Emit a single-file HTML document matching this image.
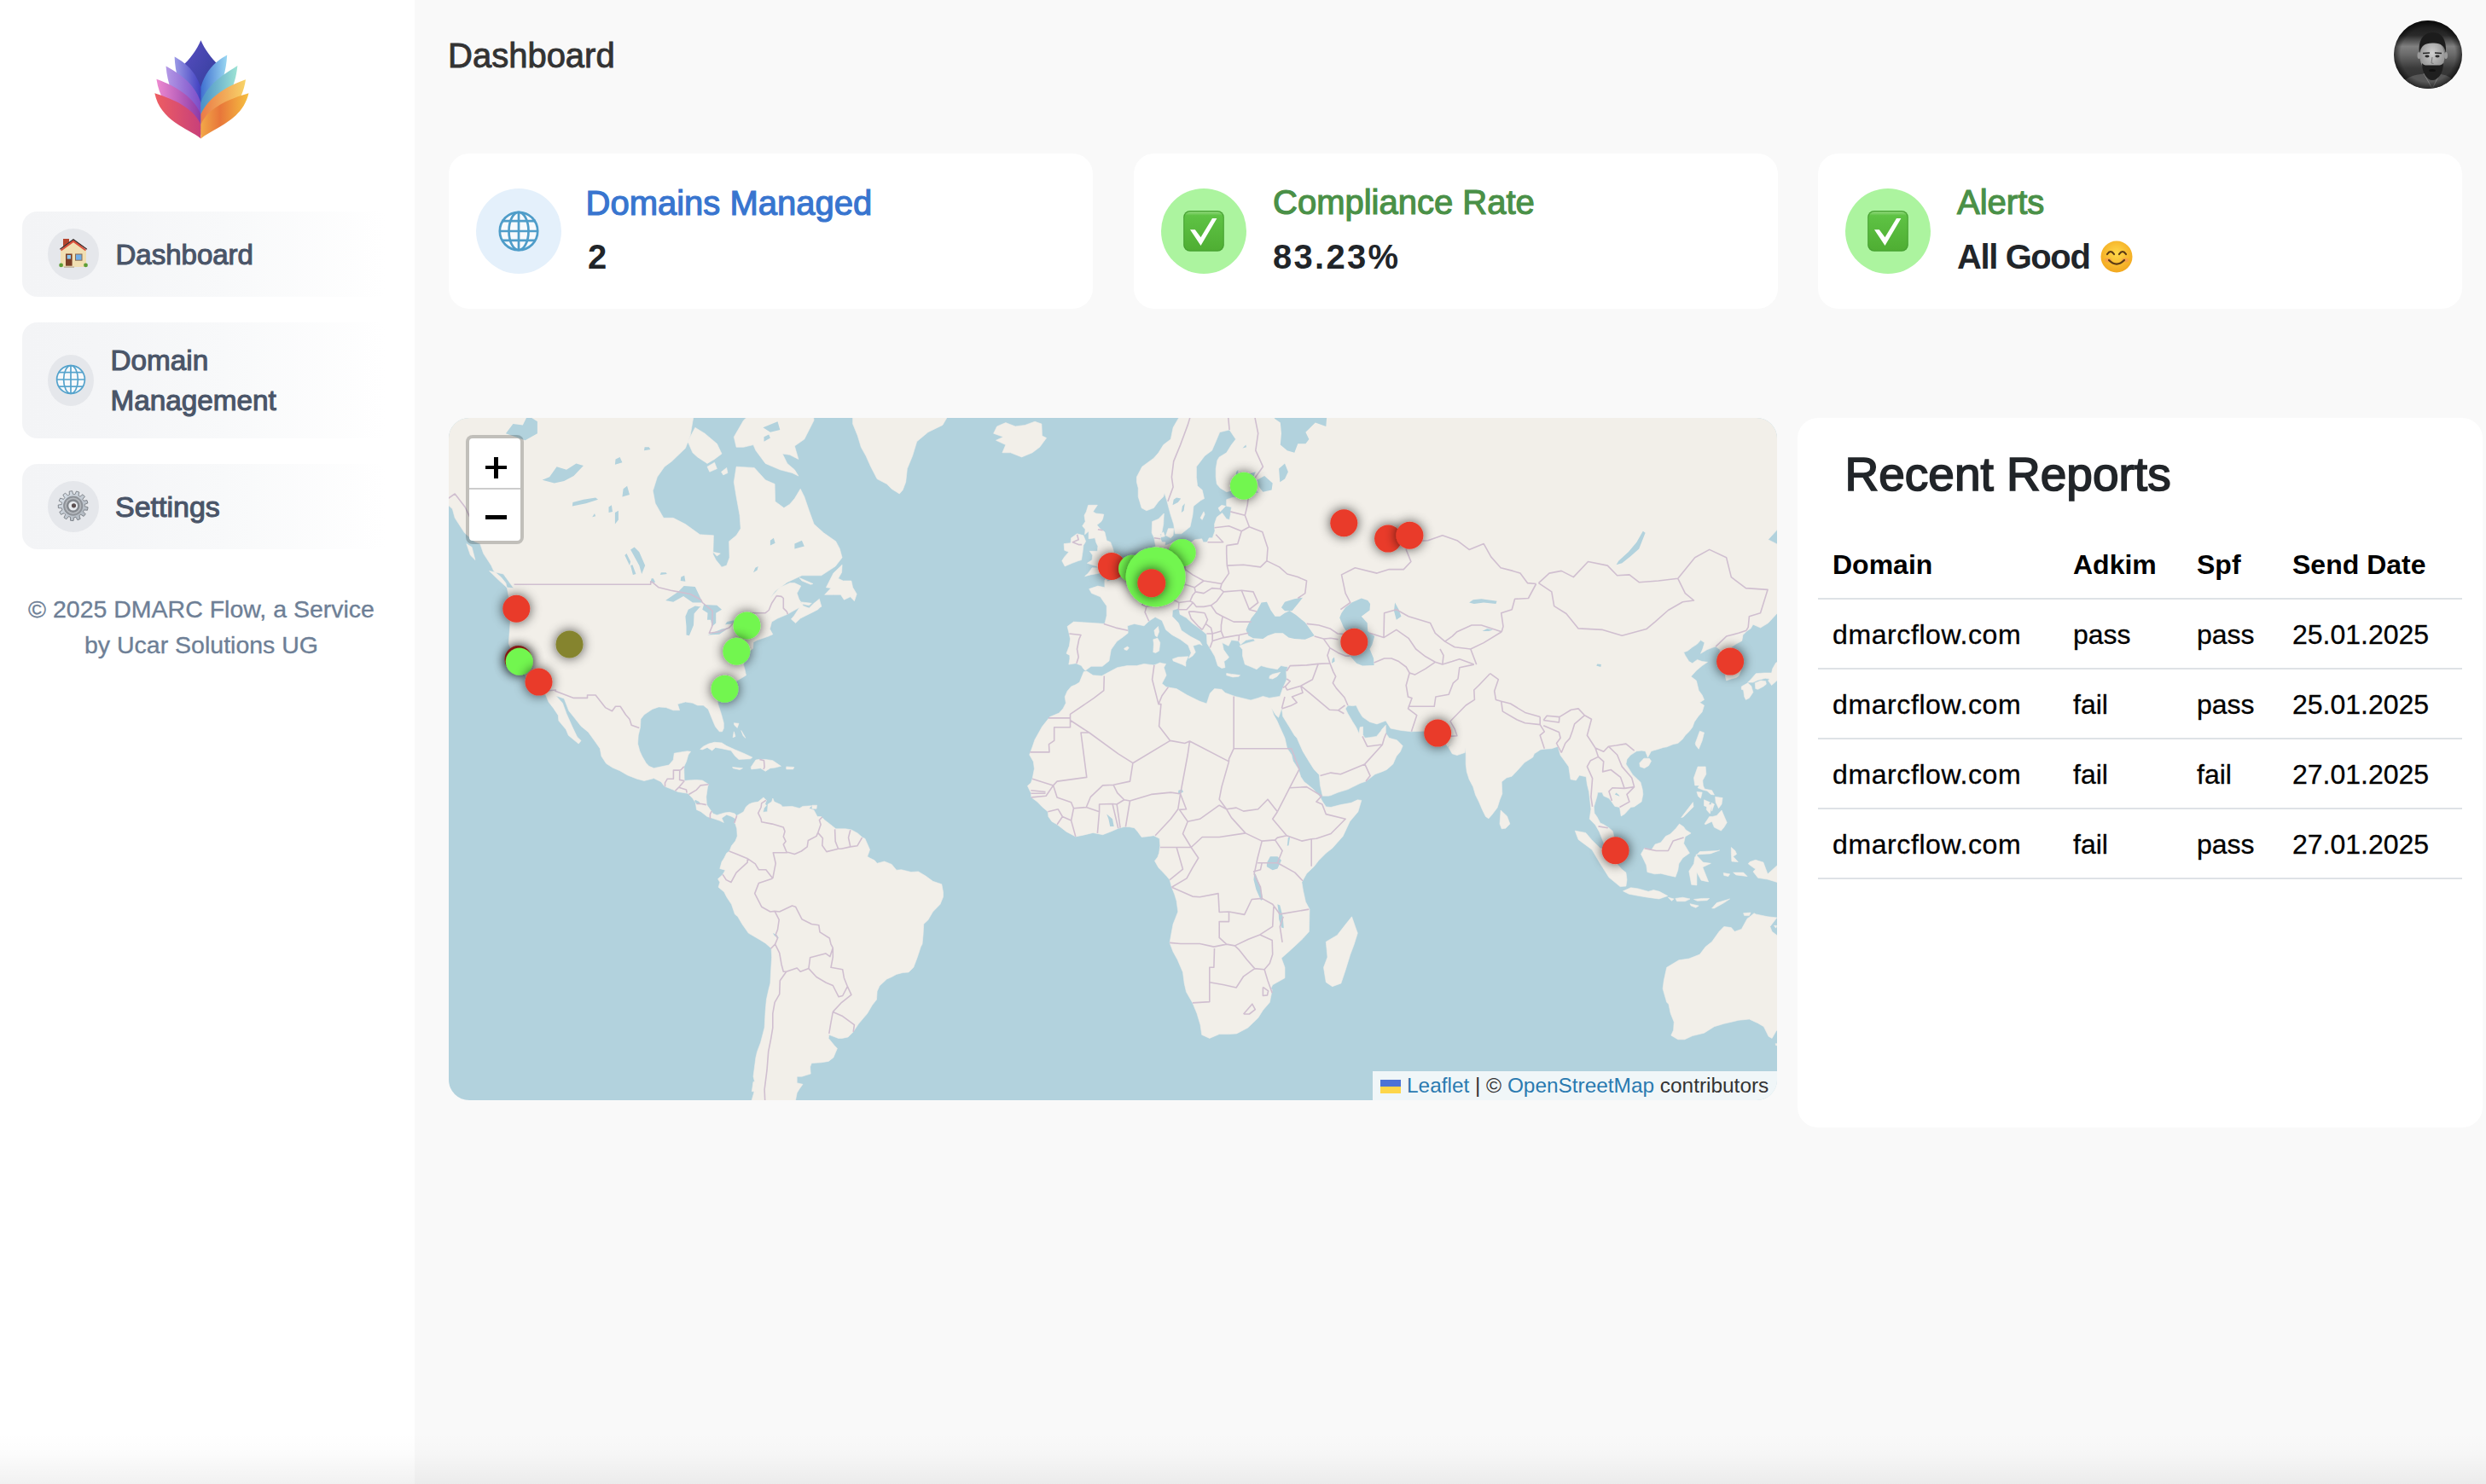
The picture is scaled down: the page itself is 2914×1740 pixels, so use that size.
<!DOCTYPE html>
<html><head><meta charset="utf-8"><title>Dashboard</title>
<style>
*{box-sizing:border-box;margin:0;padding:0}
html,body{width:2914px;height:1740px;overflow:hidden;background:#f9f9f9;font-family:"Liberation Sans",sans-serif}
.abs{position:absolute}
#side{position:absolute;left:0;top:0;width:486px;height:1740px;background:#fff}
.nav{position:absolute;left:26px;width:434px;border-radius:18px;background:linear-gradient(90deg,#f3f4f6 0%,#f4f5f7 20%,#f8f9fa 55%,#ffffff 98%)}
.ic{position:absolute;border-radius:50%;background:#e5e7eb}
.nt{position:absolute;font-size:32px;line-height:48px;color:#4a5568;white-space:nowrap;-webkit-text-stroke:1.1px #4a5568}
.foot{position:absolute;left:0;width:472px;text-align:center;font-size:28px;line-height:42px;color:#6e7f96;-webkit-text-stroke:0.35px #6e7f96}
.card{position:absolute;top:180px;height:182px;width:755px;background:#fff;border-radius:24px}
.cic{position:absolute;left:32px;top:41px;width:100px;height:100px;border-radius:50%}
.ct{position:absolute;left:163px;top:37px;font-size:40px;line-height:40px;white-space:nowrap;-webkit-text-stroke:1.2px currentColor}
.cv{position:absolute;left:163px;top:101px;font-size:40px;line-height:40px;font-weight:bold;color:#212529;white-space:nowrap}
#map{position:absolute;left:526px;top:490px;width:1557px;height:800px;border-radius:24px;overflow:hidden;background:#b2d2dd}
#rep{position:absolute;left:2107px;top:490px;width:803px;height:832px;background:#fff;border-radius:24px}
.th,.td{position:absolute;font-size:32px;line-height:48px;white-space:nowrap;color:#000}
.td{-webkit-text-stroke:0.3px #000}
.th{font-weight:bold}
.hr{position:absolute;left:24px;width:755px;height:2px;background:#dee2e6}
</style></head><body>
<div id="side">
 <svg class="abs" style="left:176px;top:42px" width="122" height="126" viewBox="0 0 122 126" id="logo">
<defs>
<linearGradient id="lg0" x1="0" y1="0" x2="1" y2="1"><stop offset="0" stop-color="#5a4fc4"/><stop offset="1" stop-color="#2b3a92"/></linearGradient>
<linearGradient id="lg1" x1="0" y1="0" x2="1" y2="0"><stop offset="0" stop-color="#9c9ae6"/><stop offset="1" stop-color="#3f3fc0"/></linearGradient>
<linearGradient id="lg2" x1="0" y1="0" x2="1" y2="0"><stop offset="0" stop-color="#b49ae6"/><stop offset="1" stop-color="#7a4cc8"/></linearGradient>
<linearGradient id="lg3" x1="0" y1="0" x2="1" y2="0"><stop offset="0" stop-color="#ee8ad0"/><stop offset="1" stop-color="#8a3aa8"/></linearGradient>
<linearGradient id="lg4" x1="0" y1="0" x2="1" y2="0"><stop offset="0" stop-color="#ee5e62"/><stop offset="1" stop-color="#c8407a"/></linearGradient>
<linearGradient id="rg1" x1="1" y1="0" x2="0" y2="0"><stop offset="0" stop-color="#9ad8f2"/><stop offset="1" stop-color="#3f6fd0"/></linearGradient>
<linearGradient id="rg2" x1="1" y1="0" x2="0" y2="0"><stop offset="0" stop-color="#9ee4d4"/><stop offset="1" stop-color="#4a8fc8"/></linearGradient>
<linearGradient id="rg3" x1="1" y1="0" x2="0" y2="0"><stop offset="0" stop-color="#f8d468"/><stop offset="1" stop-color="#ea7a48"/></linearGradient>
<linearGradient id="rg4" x1="1" y1="0" x2="0" y2="0"><stop offset="0" stop-color="#f6c040"/><stop offset="0.6" stop-color="#e8763a"/><stop offset="1" stop-color="#f2a848"/></linearGradient>
</defs>
<path d="M59.4 5.2 C55 16 46 28 37 36 C45 50 55 62 59.4 80 C64 62 74 50 82 36 C73 28 64 16 59.4 5.2Z" fill="url(#lg0)"/>
<path d="M59.4 100 C48 80 30 62 28.6 24.4 C38 30 52 38 59.4 60Z" fill="url(#lg1)"/>
<path d="M59.4 100 C70 80 88 62 90.2 22.4 C80 28 66 38 59.4 60Z" fill="url(#rg1)"/>
<path d="M59.4 110 C46 96 22 78 18.5 35.5 C30 42 52 54 59.4 78Z" fill="url(#lg2)"/>
<path d="M59.4 110 C72 96 98 78 102.4 35 C92 42 68 54 59.4 78Z" fill="url(#rg2)"/>
<path d="M59.4 116 C44 104 14 92 7.4 50.7 C22 56 50 68 59.4 92Z" fill="url(#lg3)"/>
<path d="M59.4 116 C74 104 106 92 112 51.2 C98 56 70 68 59.4 92Z" fill="url(#rg3)"/>
<path d="M59.4 120.4 C44 108 12 100 5.3 67.3 C20 72 50 82 59.4 104Z" fill="url(#lg4)"/>
<path d="M59.4 120.4 C74 108 108 100 115.5 67.3 C100 72 68 82 59.4 104Z" fill="url(#rg4)"/>
</svg>
 <div class="nav" style="top:248px;height:100px"></div>
 <div class="ic" style="left:56px;top:268px;width:60px;height:60px"></div>
 <svg class="abs" style="left:56px;top:268px" width="60" height="60" viewBox="0 0 60 60">
  <rect x="18" y="12" width="7" height="10" fill="#b5452f"/>
  <polygon points="30,12.5 47,24.5 30,16 13,24.5" fill="#d9503c"/>
  <polygon points="30,15.5 45,25.5 45,45 15,45 15,25.5" fill="#f1dfb2"/>
  <path d="M14.5 24.3 L30 12.8 L45.8 24.3" fill="none" stroke="#333" stroke-width="1.2"/>
  <path d="M15.5 25.5 L30 15 L44.5 25.5" fill="none" stroke="#d9503c" stroke-width="2"/>
  <rect x="21" y="29.5" width="7.6" height="14.2" fill="#7b3f27"/>
  <rect x="22.6" y="31" width="4.4" height="4.6" fill="#8cc7f0"/>
  <rect x="32" y="29.5" width="8.5" height="8.2" fill="#8b6b52"/>
  <rect x="33" y="30.5" width="6.5" height="6.2" fill="#6faee8"/>
  <circle cx="15.6" cy="42.9" r="2.4" fill="#5e9e35"/>
  <circle cx="44.5" cy="42.9" r="2.4" fill="#5e9e35"/>
  <rect x="19" y="44.5" width="12" height="1.3" fill="#b9ad9b"/>
 </svg>
 <div class="nt" style="left:135.5px;top:274.5px;font-size:33px">Dashboard</div>

 <div class="nav" style="top:378px;height:136px"></div>
 <div class="ic" style="left:56px;top:416px;width:54px;height:60px"></div>
 <svg class="abs" style="left:56px;top:416px" width="54" height="60" viewBox="0 0 54 60">
  <g fill="none" stroke="#55a3cc" stroke-width="1.7">
   <circle cx="27" cy="29" r="16.4" fill="#f7f9fb"/>
   <ellipse cx="27" cy="29" rx="8.4" ry="16.4"/>
   <line x1="27" y1="12.6" x2="27" y2="45.4"/>
   <line x1="10.6" y1="29" x2="43.4" y2="29"/>
   <line x1="12.5" y1="20.6" x2="41.5" y2="20.6"/>
   <line x1="12.5" y1="37.2" x2="41.5" y2="37.2"/>
  </g>
 </svg>
 <div class="nt" style="left:129.5px;top:398.5px;font-size:33.3px">Domain</div>
 <div class="nt" style="left:129.5px;top:446px;font-size:33.3px">Management</div>

 <div class="nav" style="top:544px;height:100px"></div>
 <div class="ic" style="left:56px;top:564px;width:60px;height:60px"></div>
 <svg class="abs" style="left:56px;top:564px" width="60" height="60" viewBox="0 0 60 60" id="gear"><defs><linearGradient id="gg" x1="0" y1="0" x2="1" y2="1"><stop offset="0" stop-color="#dfe6ee"/><stop offset="1" stop-color="#a9b0b8"/></linearGradient></defs>
<path d="M43.29,29.64 47.11,30.85 46.42,34.27 42.43,33.89 41.99,34.91 41.48,35.90 44.31,38.74 42.10,41.45 38.74,39.26 37.89,39.96 36.97,40.59 38.15,44.42 34.94,45.80 32.99,42.30 31.90,42.52 30.80,42.66 30.06,46.60 26.58,46.32 26.48,42.31 25.41,42.01 24.37,41.61 21.89,44.76 18.94,42.90 20.71,39.30 19.90,38.53 19.17,37.70 15.51,39.34 13.76,36.32 17.00,33.95 16.64,32.90 16.38,31.82 12.38,31.57 12.23,28.08 16.20,27.49 16.37,26.40 16.64,25.32 13.21,23.24 14.71,20.08 18.49,21.40 19.15,20.51 19.89,19.68 17.83,16.25 20.62,14.14 23.35,17.07 24.35,16.60 25.39,16.20 25.16,12.20 28.61,11.63 29.67,15.50 30.78,15.54 31.88,15.68 33.53,12.02 36.85,13.13 35.99,17.04 36.95,17.60 37.87,18.23 41.03,15.76 43.45,18.28 40.87,21.35 41.47,22.28 41.99,23.27 45.93,22.55 46.91,25.91 43.20,27.43 43.29,28.53Z" fill="url(#gg)" stroke="#6d7278" stroke-width="0.8"/>
<circle cx="29.7" cy="29.1" r="11.6" fill="#8e9298"/>
<circle cx="29.7" cy="29.1" r="9.6" fill="#b4b8bd"/>
<circle cx="29.7" cy="29.1" r="7.8" fill="#83878d"/>
<circle cx="29.7" cy="29.1" r="5.4" fill="#e6eaee"/>
<circle cx="30.5" cy="28.8" r="2.6" fill="#5b4f50"/>
</svg>
 <div class="nt" style="left:135px;top:570px;font-size:34px">Settings</div>

 <div class="foot" style="top:692.5px;font-size:28.5px">© 2025 DMARC Flow, a Service<br>by Ucar Solutions UG</div>
</div>

<div class="abs" style="left:525px;top:44.8px;font-size:40px;line-height:40px;color:#333;white-space:nowrap;-webkit-text-stroke:0.9px #333">Dashboard</div>
<svg class="abs" style="left:2806px;top:24px" width="80" height="80" viewBox="0 0 80 80" id="avatar"><defs>
<clipPath id="avc"><circle cx="40" cy="40" r="40"/></clipPath>
<linearGradient id="avbg" x1="0" y1="0" x2="0" y2="1"><stop offset="0" stop-color="#141414"/><stop offset="0.22" stop-color="#2a2a2a"/><stop offset="0.38" stop-color="#808080"/><stop offset="0.5" stop-color="#6a6a6a"/><stop offset="0.7" stop-color="#3a3a3a"/><stop offset="1" stop-color="#2e2e2e"/></linearGradient>
<radialGradient id="avf" cx="50%" cy="40%" r="60%"><stop offset="0" stop-color="#cfcfcf"/><stop offset="1" stop-color="#8c8c8c"/></radialGradient>
<radialGradient id="avs" cx="50%" cy="50%" r="50%"><stop offset="0" stop-color="#000" stop-opacity="0"/><stop offset="0.8" stop-color="#000" stop-opacity="0"/><stop offset="1" stop-color="#000" stop-opacity="0.55"/></radialGradient>
</defs>
<g clip-path="url(#avc)">
<rect width="80" height="80" fill="url(#avbg)"/>
<path d="M6 80 C10 68 22 62 45 62 C62 62 72 68 76 80Z" fill="#575757"/>
<path d="M35 62 L45 80 L54 62" fill="none" stroke="#8a8a8a" stroke-width="0.8"/>
<ellipse cx="45" cy="42" rx="14.5" ry="19" fill="url(#avf)"/>
<ellipse cx="29.5" cy="41" rx="2" ry="4" fill="#9a9a9a"/><ellipse cx="61" cy="41" rx="2" ry="4" fill="#9a9a9a"/>
<path d="M30 38 C28 22 36 14 46 14 C56 14 62 22 61 38 C59 29 55 26 45 26.5 C36 26.5 32 30 30 38Z" fill="#1c1c1c"/>
<path d="M33 50 C33 62 39 70 45 70 C52 70 58 62 58 50 C55 54 51 52 45 52.5 C39 52 36 54 33 50Z" fill="#1f1f1f"/>
<ellipse cx="45" cy="58.5" rx="4" ry="1.6" fill="#111"/>
<ellipse cx="39" cy="42" rx="2.6" ry="1.4" fill="#2a2a2a"/><ellipse cx="51" cy="42" rx="2.6" ry="1.4" fill="#2a2a2a"/>
<path d="M34 38.5 L42 38 M48 38 L56 38.5" stroke="#262626" stroke-width="1.6"/>
<path d="M45 43 L44 50 L46.5 50.5" fill="none" stroke="#777" stroke-width="1"/>
<rect width="80" height="80" fill="url(#avs)"/>
</g></svg>

<div class="card" style="left:526px">
 <div class="cic" style="background:#e4f0fb"></div>
 <svg class="abs" style="left:32px;top:41px" width="100" height="100" viewBox="0 0 100 100">
  <g fill="none" stroke="#4f9dc9" stroke-width="2.7">
   <circle cx="50" cy="50" r="22.2" fill="#f7fafd"/>
   <ellipse cx="50" cy="50" rx="11.5" ry="22.2"/>
   <line x1="50" y1="27.8" x2="50" y2="72.2"/>
   <line x1="27.8" y1="50" x2="72.2" y2="50"/>
   <line x1="30" y1="38.2" x2="70" y2="38.2"/>
   <line x1="30" y1="60.8" x2="70" y2="60.8"/>
  </g>
 </svg>
 <div class="ct" style="color:#3875cf;left:160.5px;top:38px">Domains Managed</div>
 <div class="cv">2</div>
</div>

<div class="card" style="left:1329px">
 <div class="cic" style="background:#acf49f"></div>
 <svg class="abs" style="left:32px;top:41px" width="100" height="100" viewBox="0 0 100 100"><defs><linearGradient id="ckg" x1="0" y1="0" x2="0" y2="1"><stop offset="0" stop-color="#8fd87a"/><stop offset="0.1" stop-color="#5ec244"/><stop offset="1" stop-color="#4fae33"/></linearGradient></defs>
  <rect x="26.2" y="26" width="47.6" height="47.8" rx="7.6" fill="#45a030"/>
  <rect x="27.3" y="27.2" width="45.4" height="45.2" rx="6.6" fill="url(#ckg)"/>
  <path d="M34 48.2 L39.8 48.2 L46.5 57.3 L60 35 L65.4 35 L46.5 67 Z" fill="#fff"/>
 </svg>
 <div class="ct" style="color:#4a9047">Compliance Rate</div>
 <div class="cv" style="letter-spacing:2.3px">83.23%</div>
</div>

<div class="card" style="left:2131px">
 <div class="cic" style="background:#acf49f"></div>
 <svg class="abs" style="left:32px;top:41px" width="100" height="100" viewBox="0 0 100 100">
  <rect x="26.2" y="26" width="47.6" height="47.8" rx="7.6" fill="#45a030"/>
  <rect x="27.3" y="27.2" width="45.4" height="45.2" rx="6.6" fill="url(#ckg)"/>
  <path d="M34 48.2 L39.8 48.2 L46.5 57.3 L60 35 L65.4 35 L46.5 67 Z" fill="#fff"/>
 </svg>
 <div class="ct" style="color:#4a9047">Alerts</div>
 <div class="cv" style="letter-spacing:-1.4px">All Good</div>
 <svg class="abs" style="left:330px;top:101px" width="40" height="40" viewBox="0 0 40 40">
  <defs><radialGradient id="sm" cx="50%" cy="40%" r="60%"><stop offset="0" stop-color="#ffd84a"/><stop offset="1" stop-color="#f2a71e"/></radialGradient></defs>
  <circle cx="20" cy="20" r="18.5" fill="url(#sm)"/>
  <ellipse cx="10" cy="24" rx="4" ry="2.5" fill="#f58a5a" opacity=".5"/>
  <ellipse cx="30" cy="24" rx="4" ry="2.5" fill="#f58a5a" opacity=".5"/>
  <path d="M9 17 Q13 11 17 17 M23 17 Q27 11 31 17" fill="none" stroke="#5b3a14" stroke-width="2.2" stroke-linecap="round"/>
  <path d="M11 24 Q20 33 29 24" fill="none" stroke="#5b3a14" stroke-width="2.2" stroke-linecap="round"/>
 </svg>
</div>
<div id="map"><svg width="1557" height="800" viewBox="0 0 1557 800" style="position:absolute;left:0;top:0">
<defs><filter id="sh" x="-80%" y="-80%" width="260%" height="260%"><feGaussianBlur in="SourceAlpha" stdDeviation="7"/><feOffset dx="0" dy="0"/><feComponentTransfer><feFuncA type="linear" slope="0.7"/></feComponentTransfer><feMerge><feMergeNode/><feMergeNode in="SourceGraphic"/></feMerge></filter></defs>
<path d="M319.5,63.3 325.7,58.4 326.9,64.5 321.8,66.9ZM309.8,157.2 318.3,159.1 314.4,162.0ZM-217.6,-144.9 -189.1,86.7 -75.3,92.4 -24.1,86.7 -4.2,99.1 4.3,106.7 7.2,117.3 18.5,134.8 29.9,144.7 36.7,147.6 40.7,159.1 49.8,173.1 52.7,179.4 61.2,186.6 66.9,193.6 68.6,200.5 72.0,219.0 72.0,240.6 70.3,264.4 73.7,273.2 78.3,282.0 81.1,284.9 82.2,288.4 84.5,292.0 91.9,306.0 101.6,309.4 104.4,311.5 111.8,320.3 117.0,333.0 122.6,340.2 128.3,348.7 128.9,355.1 137.4,365.3 140.3,372.2 152.2,382.1 155.1,378.4 150.5,374.0 144.8,362.1 138.0,346.7 133.4,334.3 125.5,325.7 135.2,329.0 140.8,343.5 146.5,350.6 155.1,361.5 163.6,368.4 172.1,380.3 177.3,387.7 179.0,396.8 184.6,405.3 192.0,410.1 200.6,413.7 209.7,419.0 220.5,423.2 229.0,425.5 240.4,422.6 248.9,426.7 252.9,432.0 263.2,436.1 268.8,438.5 280.2,440.2 285.9,446.1 289.3,451.3 290.5,459.4 295.6,461.7 303.0,467.5 308.7,469.2 317.2,472.1 322.3,474.4 320.0,469.2 325.7,465.2 332.0,467.5 337.7,470.9 338.8,472.6 334.8,474.9 338.2,468.6 335.4,464.0 329.1,462.3 323.5,462.9 314.4,465.7 309.8,464.0 302.4,453.6 301.8,444.3 303.5,432.6 304.7,429.7 297.3,425.0 289.9,424.4 280.2,425.0 276.2,425.5 275.7,408.9 278.5,402.9 280.8,395.0 283.6,391.3 279.7,390.7 271.7,391.9 264.3,393.2 263.2,401.0 258.0,407.1 251.8,408.3 240.4,410.7 234.7,408.3 231.3,404.7 226.7,396.8 223.9,390.7 221.6,382.1 222.2,372.2 224.5,362.7 225.0,353.2 229.0,348.0 238.7,341.5 246.1,338.9 254.6,339.6 263.2,342.8 270.6,342.8 268.3,335.6 277.4,333.0 285.9,334.3 291.6,337.0 298.4,337.0 304.1,341.5 307.5,350.0 310.9,358.3 312.6,362.1 317.2,367.8 320.6,367.8 322.3,364.0 322.3,357.7 319.5,347.4 315.5,335.0 314.9,328.4 318.9,321.7 323.5,318.3 331.4,311.5 334.8,310.1 342.8,305.3 348.5,301.8 346.8,294.1 345.6,289.9 346.2,285.6 349.6,279.1 350.8,276.2 351.9,274.0 356.5,270.3 357.0,262.9 361.6,260.6 368.4,258.3 374.7,256.1 379.8,253.8 376.4,247.6 378.6,239.1 385.5,235.1 396.8,230.3 402.5,227.1 411.1,222.2 404.8,231.9 401.4,235.9 406.5,240.6 412.2,235.1 416.8,232.7 426.4,227.9 432.7,224.7 436.7,220.6 433.8,213.2 428.1,217.3 422.4,223.1 415.6,220.6 410.5,212.3 408.2,205.6 412.8,197.1 405.4,193.6 399.7,193.6 388.3,198.8 376.9,210.7 382.6,203.1 396.8,192.7 413.9,184.8 436.7,184.8 453.2,174.0 461.1,163.8 458.3,153.4 453.7,144.7 439.5,134.8 428.1,124.6 422.4,108.8 416.8,92.4 412.2,83.3 405.4,94.6 399.7,101.2 392.9,105.6 382.6,97.9 382.1,77.5 371.2,72.8 358.2,58.4 337.1,57.2 334.3,75.2 337.1,92.4 341.1,114.2 342.2,129.7 337.1,137.8 328.6,144.7 329.1,163.8 325.7,173.1 320.0,174.9 313.2,166.6 309.8,160.1 310.4,137.8 294.4,136.8 277.4,124.6 263.2,117.3 251.8,117.3 242.1,100.2 239.3,85.6 244.4,69.3 252.9,57.2 261.4,50.9 277.4,35.6 283.1,20.9 285.9,4.2 294.4,-41.4 237.6,-84.6 -217.6,-84.6ZM428.1,2.8 422.4,14.0 416.8,25.0 405.4,33.0 409.9,48.4 399.7,43.3 391.2,42.1 396.8,53.4 405.4,60.8 409.9,68.1 402.5,64.5 388.3,60.8 371.2,53.4 359.9,38.2 357.0,31.6 345.6,34.3 337.1,34.3 334.3,22.3 345.6,2.8 359.9,-10.4 368.4,-17.9 266.0,-84.6 436.7,-84.6 425.3,-17.9ZM280.2,27.7 288.8,11.3 300.1,18.2 314.4,30.3 320.0,42.1 311.5,48.4 303.0,53.4 291.6,45.9 285.9,40.8ZM303.0,57.2 311.5,52.2 314.4,59.6 305.8,63.3ZM528.3,89.0 519.2,83.3 513.5,77.5 502.1,71.6 494.7,57.2 489.0,44.6 483.3,34.3 479.3,20.9 473.6,7.0 473.6,-17.9 465.1,-84.6 664.2,-84.6 630.1,-25.6 596.0,-20.9 578.9,8.4 561.8,16.8 548.7,27.7 543.6,44.6 537.4,59.6 535.7,75.2 532.2,84.5ZM638.6,18.2 642.6,9.9 652.8,5.6 664.2,9.9 675.6,8.4 687.0,4.2 694.9,7.0 695.5,20.9 700.6,23.6 692.7,34.3 684.1,40.8 671.6,45.9 658.5,40.8 648.9,40.8 652.8,31.6 641.5,26.3 650.0,22.3ZM294.7,388.5 298.4,385.2 304.7,382.1 311.5,380.3 320.0,380.9 325.7,384.6 335.4,388.9 345.6,393.2 355.9,398.0 353.6,399.8 340.0,400.4 335.4,396.2 330.9,390.1 320.0,387.7 312.6,386.4 308.7,390.1 303.0,386.4 297.3,388.9ZM354.2,409.5 359.9,401.0 363.8,400.4 371.2,400.4 379.8,401.7 389.4,408.3 382.6,410.1 376.9,410.7 371.2,414.3 365.6,410.7 354.7,411.9ZM395.7,408.9 404.8,409.5 403.7,411.9 395.7,411.9ZM332.6,409.5 344.5,410.7 341.1,412.5 333.1,410.7ZM334.3,357.7 340.0,358.3 338.2,363.4 334.8,360.2ZM334.3,367.8 336.0,373.4 333.1,374.7ZM342.8,366.5 345.1,370.3 347.9,375.3 345.1,372.8ZM440.6,207.3 448.0,199.6 442.4,198.8 450.9,182.1 461.1,172.2 460.6,181.2 456.6,188.3 462.3,191.0 471.9,191.0 473.6,198.8 478.2,206.5 475.4,214.8 470.8,209.8 463.4,213.2 459.4,207.3 450.9,207.3ZM47.5,179.4 64.0,183.0 76.0,199.6 68.0,198.8 58.4,190.1ZM20.8,147.6 27.1,151.5 31.0,166.6 25.4,161.0ZM411.1,187.5 427.0,194.5 424.2,195.3 413.9,191.0ZM411.6,215.7 425.3,217.3 422.4,219.8 413.9,218.1ZM428.1,223.9 436.7,221.4 434.4,212.3 428.7,217.3ZM337.7,466.3 342.8,463.4 345.6,461.7 348.5,455.9 351.9,453.0 355.9,451.3 362.7,450.1 369.0,444.9 372.4,448.4 370.7,453.0 372.4,454.2 369.5,457.7 368.4,462.3 373.5,461.7 374.1,453.0 378.6,450.1 379.8,446.1 381.5,450.1 389.4,453.6 391.2,455.9 402.5,455.4 411.1,457.7 415.0,455.4 425.3,454.8 422.4,457.7 428.1,460.0 432.1,467.5 436.7,467.5 440.6,471.5 448.0,477.2 453.7,481.8 465.1,481.8 471.9,482.9 479.3,486.9 485.0,492.1 487.9,493.2 493.6,506.3 490.7,514.3 493.6,516.0 499.2,518.8 502.1,522.3 510.6,520.0 519.2,523.4 524.8,530.2 530.5,529.7 541.9,532.5 550.4,531.9 559.0,537.1 567.5,543.3 577.8,546.8 579.5,555.9 579.5,561.7 576.0,570.3 567.5,579.0 561.8,588.8 556.7,593.5 556.1,605.3 555.0,617.1 553.3,620.1 550.4,629.1 548.7,634.0 544.8,644.3 539.1,649.9 532.2,650.5 524.8,652.4 519.2,655.5 513.5,658.0 504.9,666.1 502.1,672.4 501.5,682.0 496.4,688.5 490.7,698.3 485.0,705.0 480.5,710.3 473.6,720.5 468.0,726.0 461.1,727.4 456.6,727.4 449.2,724.6 445.8,723.3 445.2,727.4 452.0,735.8 455.4,739.3 450.9,750.0 445.2,754.4 436.7,755.8 425.3,756.6 423.6,761.0 424.2,769.1 413.9,772.2 408.2,772.2 408.2,779.7 415.0,781.3 411.1,786.7 408.2,791.4 405.9,803.3 398.0,804.9 394.0,813.9 402.5,823.9 402.5,828.1 392.9,841.0 388.3,849.9 385.5,858.9 388.3,868.2 379.8,871.0 368.4,882.4 357.0,868.2 354.2,854.4 348.5,828.1 348.5,815.5 354.2,803.3 359.9,783.6 357.0,772.2 359.9,750.0 361.6,742.9 365.6,732.3 370.1,715.1 371.2,695.0 372.4,682.0 375.2,669.3 376.9,663.0 377.5,650.5 378.6,632.2 378.1,621.9 371.2,615.9 365.6,612.4 351.3,604.1 343.9,593.5 338.8,584.8 335.4,581.9 331.4,570.3 325.7,561.7 322.9,555.9 316.1,550.2 317.8,544.5 315.5,540.5 321.2,535.4 324.0,530.2 317.8,528.5 320.0,520.6 322.9,516.0 325.7,510.3 329.1,508.0 331.4,501.8 336.0,496.1 338.2,490.4 337.7,481.8 336.0,476.1 334.8,474.9 338.2,468.6ZM387.7,869.1 390.0,890.2 399.7,892.2 379.8,894.2 368.4,887.3 379.8,877.6ZM357.0,778.2 359.9,779.0 359.9,789.8 355.3,789.8ZM425.9,454.2 431.5,454.2 431.0,458.2 425.9,458.2ZM746.1,296.2 753.0,291.3 766.1,291.3 774.0,284.9 776.3,271.8 783.1,262.1 790.5,256.8 796.2,252.3 795.6,243.8 803.6,241.4 815.0,243.8 820.7,238.3 828.1,233.5 836.0,237.5 840.6,248.4 848.0,254.5 857.6,259.8 866.7,266.6 870.2,275.4 867.3,282.0 871.9,279.1 875.3,274.7 872.4,267.3 879.8,265.1 883.2,266.6 880.4,262.1 869.0,256.1 858.8,249.2 855.4,240.6 848.0,232.7 848.5,225.5 855.9,223.1 857.1,230.3 864.5,234.3 871.3,240.6 881.0,247.6 888.4,253.8 888.9,264.4 892.9,271.0 898.0,279.8 901.4,290.6 906.0,293.4 910.0,292.7 908.8,285.6 912.8,282.7 914.5,280.5 908.3,271.8 906.6,263.6 914.0,267.3 917.4,260.6 925.9,261.4 928.2,265.8 934.4,260.6 943.0,259.1 945.3,261.4 934.4,264.4 927.0,267.3 930.5,271.8 930.5,279.1 933.3,289.1 939.0,291.3 947.0,294.8 952.1,290.6 960.0,292.7 971.4,294.8 975.4,290.6 983.9,292.0 981.7,297.6 982.2,306.7 977.7,316.9 974.3,326.4 961.8,328.4 954.4,326.4 948.7,328.4 940.1,331.0 921.4,326.4 910.0,322.3 906.0,318.3 897.5,317.6 892.3,323.0 888.4,335.0 880.4,332.3 865.6,325.0 853.1,317.6 841.1,315.6 836.0,311.5 841.1,301.8 838.3,292.7 840.6,288.4 836.0,287.7 833.8,287.0 826.9,289.9 815.0,288.4 806.4,290.6 795.1,290.6 783.7,292.7 774.6,297.6 765.5,302.5 755.2,301.8 747.8,296.9 744.4,297.6 739.3,310.1 734.8,312.8 729.6,314.9 725.1,320.3 722.2,327.0 723.4,334.3 720.0,340.9 715.4,346.1 704.6,350.6 695.5,362.1 689.8,372.2 687.0,377.2 684.1,385.8 680.7,395.0 685.3,402.9 686.4,411.3 684.1,423.2 682.4,427.9 678.4,431.4 682.4,439.6 683.0,444.9 689.8,450.1 695.5,455.9 702.3,461.7 702.9,467.5 706.9,473.2 713.1,476.7 724.0,485.2 734.8,490.9 743.9,489.2 755.2,486.4 766.6,488.7 776.9,484.7 784.8,481.2 791.7,479.5 797.3,479.5 803.6,480.7 807.6,485.2 812.1,491.5 817.8,490.9 826.4,489.8 833.2,493.2 833.8,501.8 832.6,510.3 830.9,514.9 827.5,519.4 832.0,527.4 834.9,530.2 841.7,537.6 845.1,541.6 847.4,550.2 850.8,558.8 853.1,566.3 854.8,579.0 849.1,593.5 847.4,602.3 845.1,615.4 849.1,626.1 854.2,635.2 860.5,649.9 862.2,663.0 864.5,673.1 871.9,685.9 877.0,698.3 881.0,711.7 882.7,723.3 891.8,727.4 903.2,722.6 914.5,722.6 923.6,721.9 936.7,715.1 948.7,703.6 954.4,694.4 962.3,685.3 965.2,670.5 963.5,669.3 965.7,664.8 980.0,656.7 980.0,644.3 976.0,633.4 985.6,624.9 994.2,617.1 1001.0,610.6 1008.4,602.3 1009.0,576.1 1004.4,567.4 1001.6,554.8 999.9,544.5 1005.6,534.2 1014.1,526.2 1019.8,518.8 1028.3,510.3 1035.7,504.6 1048.2,490.4 1056.2,473.2 1065.9,461.7 1069.8,448.4 1065.3,447.8 1057.9,451.3 1045.4,453.6 1034.0,456.5 1028.3,455.9 1024.3,450.1 1021.5,444.9 1014.1,436.1 1006.7,429.7 1002.7,426.7 998.7,420.8 995.9,411.9 989.6,402.3 987.9,395.0 982.8,387.7 980.0,375.3 974.3,362.7 970.9,355.1 966.9,348.0 963.5,337.6 964.0,339.6 969.1,348.0 972.6,351.3 974.3,346.7 976.5,340.2 977.7,350.0 985.6,362.7 991.3,372.2 994.2,375.3 1001.0,390.7 1008.4,402.9 1014.1,411.9 1020.3,418.4 1021.5,430.9 1024.3,443.2 1031.2,443.2 1034.0,442.6 1042.5,439.1 1053.9,435.6 1068.1,428.5 1075.0,426.1 1085.8,417.8 1093.7,414.9 1099.4,412.5 1106.8,405.9 1110.8,396.8 1115.4,391.3 1118.2,384.6 1111.4,377.8 1102.3,375.3 1098.3,369.7 1098.3,360.2 1093.7,365.3 1092.6,367.2 1087.5,373.4 1079.5,374.7 1073.8,375.3 1071.5,371.5 1071.5,362.1 1068.1,362.7 1067.0,370.3 1063.6,362.7 1059.6,356.4 1053.9,346.7 1051.1,340.9 1053.9,337.0 1059.6,337.6 1063.6,337.0 1067.0,344.1 1071.0,350.6 1079.5,356.4 1088.0,358.9 1098.3,355.1 1104.0,364.0 1116.5,366.5 1128.4,367.8 1142.1,367.2 1156.9,366.5 1159.2,370.3 1162.0,375.9 1167.7,379.0 1170.5,385.2 1176.8,382.1 1171.7,385.8 1176.2,393.8 1181.9,395.6 1191.0,392.5 1191.0,386.4 1192.2,393.8 1192.2,405.9 1193.3,414.9 1196.1,423.8 1200.7,432.6 1203.5,442.0 1207.5,450.1 1211.5,459.4 1215.5,467.5 1218.9,469.8 1222.9,465.2 1229.1,457.1 1232.0,447.8 1234.8,440.8 1234.2,426.7 1239.9,422.0 1246.2,420.2 1253.0,413.1 1261.0,404.1 1270.7,398.0 1272.4,393.8 1279.8,388.9 1284.3,388.3 1292.8,387.7 1300.2,385.2 1303.1,395.6 1307.1,401.0 1312.8,408.9 1315.0,423.8 1321.3,425.0 1325.3,419.0 1333.2,420.8 1334.4,429.7 1336.6,438.5 1338.9,458.8 1337.2,470.3 1344.0,477.2 1348.6,485.2 1354.3,499.5 1361.1,505.2 1366.2,508.6 1370.8,507.5 1366.8,500.1 1366.2,493.2 1364.5,484.7 1360.0,480.7 1353.7,476.7 1349.7,474.9 1345.8,467.5 1342.9,463.4 1342.3,455.9 1345.8,444.3 1346.9,439.1 1352.0,439.1 1353.7,443.2 1360.0,446.1 1362.8,449.6 1366.8,455.4 1372.5,456.5 1374.2,466.9 1378.2,464.6 1385.6,456.5 1389.6,455.9 1398.1,450.1 1399.8,441.4 1399.2,435.6 1397.0,427.3 1393.5,423.8 1387.8,418.4 1385.6,414.9 1379.9,405.9 1381.0,400.4 1385.0,395.6 1392.4,390.7 1398.1,390.1 1402.6,390.7 1405.5,398.0 1409.5,390.7 1418.0,388.3 1423.7,386.4 1427.7,385.8 1435.1,382.7 1440.8,381.5 1446.4,376.5 1449.3,372.2 1454.4,367.2 1457.8,362.7 1460.1,356.4 1464.6,350.0 1469.2,344.8 1471.5,337.0 1466.4,333.7 1471.5,330.4 1469.2,325.0 1465.2,319.6 1462.4,308.0 1456.1,303.2 1462.4,296.2 1469.2,290.6 1475.5,286.3 1469.2,285.6 1463.5,283.4 1457.8,287.7 1453.8,285.6 1449.3,278.4 1447.6,274.7 1452.1,273.2 1457.8,268.8 1463.5,265.1 1467.5,260.6 1472.0,263.6 1469.8,271.0 1467.5,276.2 1474.9,271.8 1480.6,269.6 1485.1,268.1 1490.2,271.8 1490.2,282.0 1495.9,284.1 1498.2,287.7 1496.5,296.2 1496.5,303.2 1497.6,308.0 1503.3,306.0 1509.0,304.6 1511.9,302.5 1514.7,296.2 1514.1,289.1 1509.0,278.4 1503.3,268.8 1509.0,265.1 1515.8,261.4 1517.0,254.5 1521.5,250.0 1526.1,246.9 1528.9,242.2 1537.5,246.1 1546.6,240.6 1557.4,228.7 1565.9,214.0 1575.6,199.6 1577.3,182.1 1582.4,163.8 1578.4,154.4 1560.2,149.6 1546.6,142.7 1563.1,124.6 1585.8,97.9 1631.3,92.4 1688.2,63.3 1802.0,25.0 1802.0,-278.1 891.8,-278.1 863.3,-33.4 857.6,-20.9 859.9,-7.4 849.1,11.3 846.3,25.0 837.7,31.6 832.0,40.8 826.4,47.2 812.7,57.2 806.4,69.3 806.4,75.2 808.2,82.2 808.2,92.4 809.9,97.9 812.1,105.6 817.8,108.8 826.4,105.6 832.0,97.9 837.7,92.4 838.9,87.9 841.7,96.8 845.7,112.0 849.7,124.6 851.4,135.8 858.8,135.8 869.0,127.7 871.9,114.2 873.0,103.4 881.5,96.8 885.5,94.6 883.2,84.5 877.6,79.8 876.4,69.3 876.4,57.2 883.2,48.4 886.1,44.6 894.6,38.2 900.3,25.0 903.7,16.8 915.1,14.0 922.5,25.0 917.4,31.6 911.7,40.8 903.2,45.9 900.9,49.7 899.2,59.6 899.2,69.3 900.3,77.5 904.3,82.2 911.7,86.7 920.2,84.5 928.8,82.2 940.1,81.0 945.8,84.5 949.8,87.9 943.0,87.9 937.3,92.4 925.9,92.4 918.5,93.5 911.7,95.7 911.7,103.4 917.4,104.5 916.2,114.2 915.1,119.4 911.7,118.4 906.6,111.5 900.3,116.3 897.5,124.6 898.0,132.8 895.2,140.8 891.2,140.8 888.9,145.7 884.4,145.7 882.7,141.8 874.7,142.7 869.0,146.7 859.4,150.5 854.8,144.7 849.1,145.7 843.4,148.6 839.4,149.6 840.0,145.7 836.0,145.7 834.3,141.8 836.0,133.8 837.7,124.6 838.3,112.0 832.0,118.4 824.6,121.5 824.1,134.8 826.9,140.8 828.6,150.5 819.0,156.3 812.1,155.3 805.3,160.1 803.6,166.6 800.8,169.4 797.9,174.0 792.2,176.7 788.8,177.6 787.1,184.8 779.1,189.2 772.3,191.8 770.6,189.2 768.9,190.1 768.9,198.8 760.9,197.1 750.7,200.5 753.5,205.6 763.8,209.8 766.6,214.0 771.2,220.6 771.2,231.9 768.9,241.4 756.4,240.6 743.9,239.8 732.5,239.1 725.1,244.5 727.4,253.8 728.5,259.1 727.4,267.3 724.0,276.2 727.9,278.4 727.9,282.7 726.8,289.1 735.3,287.7 741.6,290.6 743.9,294.1ZM745.6,185.7 752.4,183.9 758.1,183.0 766.6,181.2 772.3,179.9 779.1,179.4 786.0,175.8 783.1,170.3 787.7,162.9 785.4,160.1 779.7,158.2 778.6,153.4 775.7,145.7 771.2,143.7 768.9,133.8 763.2,129.7 759.8,125.6 764.9,121.5 766.6,118.4 767.8,113.1 758.7,112.0 755.2,109.9 760.4,102.3 749.6,102.3 747.3,109.9 745.0,114.2 746.1,121.5 742.7,126.7 746.1,130.7 745.6,136.8 750.1,132.8 750.1,141.8 757.5,140.8 758.7,145.7 760.9,150.5 760.4,156.3 751.3,156.3 754.7,161.0 754.1,166.6 748.4,170.3 754.1,172.2 759.8,174.0 760.9,175.8 754.1,175.8 749.6,182.1ZM741.6,166.6 743.3,155.3 743.9,149.6 746.7,144.7 743.9,137.8 736.5,135.8 729.6,140.8 729.1,146.7 721.1,147.6 721.7,155.3 726.8,157.2 721.7,162.9 718.8,167.6 722.2,174.0 730.8,170.3 738.2,167.6ZM826.9,249.2 831.5,244.5 832.6,250.7 830.3,256.8 828.1,255.3ZM825.8,259.8 830.9,258.3 833.8,263.6 832.6,273.2 828.6,275.4 825.8,274.7 826.4,265.1ZM848.5,282.7 854.8,280.5 866.7,279.8 863.9,286.3 863.9,291.3 859.4,289.1 849.1,284.9ZM911.7,299.4 917.4,300.4 923.1,301.1 927.6,301.8 925.9,303.2 919.1,303.9 911.7,301.8ZM961.8,305.3 962.3,302.5 965.7,300.4 974.8,298.3 970.9,303.2 965.7,306.0ZM791.7,270.3 795.6,268.1 797.3,269.6 795.1,272.5 792.2,271.8ZM840.6,137.8 843.4,129.7 849.7,129.7 849.1,137.8 846.3,140.8ZM833.8,136.8 837.7,133.8 839.4,138.8 835.5,139.8ZM881.0,117.3 885.0,109.9 886.1,113.1 883.2,119.4ZM902.0,105.6 906.0,102.3 910.6,103.4 904.3,109.9ZM1232.0,476.1 1233.1,460.0 1240.5,466.9 1243.9,476.1 1238.8,481.2 1234.2,481.8ZM1058.5,584.8 1063.6,599.4 1065.3,604.1 1061.3,617.1 1056.8,629.1 1051.1,647.4 1045.9,663.0 1035.7,666.7 1028.3,661.7 1025.5,644.3 1030.0,632.2 1028.3,614.2 1041.4,606.5 1051.1,594.1ZM1515.3,314.9 1522.7,310.8 1526.7,314.2 1528.9,321.7 1524.4,328.4 1520.4,330.4 1518.7,327.0 1517.6,319.0 1515.3,318.3ZM1531.2,310.8 1538.0,308.0 1543.7,308.7 1544.3,312.2 1540.9,314.9 1534.6,318.3 1531.8,317.6ZM1522.7,310.1 1525.5,307.4 1532.3,299.7 1542.0,299.0 1550.6,299.0 1551.7,294.1 1555.7,287.0 1559.1,285.6 1565.9,283.4 1573.3,274.7 1574.4,263.6 1578.4,258.3 1583.0,263.6 1585.3,274.7 1580.1,279.8 1579.6,289.9 1578.4,298.3 1575.0,303.9 1573.3,299.0 1569.3,301.8 1567.6,306.0 1558.5,306.0 1556.8,308.0 1550.6,313.5 1546.6,308.0 1548.3,306.0 1543.2,305.3 1534.6,307.4 1528.9,310.1ZM1461.2,381.5 1466.4,367.2 1471.5,369.0 1469.2,378.4 1465.2,388.3 1461.8,384.0ZM1395.8,404.7 1400.9,399.2 1407.2,399.2 1409.5,402.3 1406.6,407.7 1401.5,410.7 1396.4,408.9ZM1459.5,422.0 1464.1,408.9 1473.2,408.9 1473.8,417.8 1469.8,425.0 1470.3,430.9 1472.0,435.0 1480.6,436.7 1483.4,442.0 1479.4,441.4 1474.9,437.3 1469.8,436.1 1464.1,433.8 1465.8,430.9 1460.7,430.9ZM1472.0,476.1 1477.7,467.5 1481.1,467.5 1486.3,466.3 1492.0,460.0 1498.2,474.4 1494.8,480.1 1491.4,484.1 1483.4,480.1 1480.6,473.2 1473.2,476.7ZM1484.6,444.3 1493.1,445.5 1492.0,453.0 1488.5,457.7 1485.1,450.7ZM1471.5,447.8 1478.3,450.7 1474.9,455.9 1471.5,454.8ZM1474.9,453.6 1480.6,453.6 1478.3,464.0 1474.3,459.4ZM1480.0,451.3 1483.4,453.0 1480.6,461.1ZM1462.9,438.5 1469.2,439.1 1467.5,446.1 1464.6,443.7ZM1444.7,468.6 1458.4,450.7 1459.0,455.9 1447.0,468.0ZM1401.5,504.6 1409.5,506.9 1414.0,500.1 1420.8,497.8 1426.5,490.4 1431.7,488.1 1438.5,481.2 1442.5,476.1 1447.6,479.5 1449.9,482.9 1456.1,486.9 1449.3,490.9 1447.6,498.9 1454.4,510.3 1446.4,516.0 1441.9,522.8 1440.8,530.2 1437.9,538.2 1429.9,536.5 1420.8,534.2 1413.4,534.8 1404.9,532.5 1403.8,524.5 1399.8,516.0 1397.5,511.4ZM1320.2,484.1 1332.7,486.4 1339.5,494.4 1349.7,504.6 1355.4,506.3 1364.0,513.2 1368.5,521.7 1374.8,529.1 1379.9,533.1 1381.0,541.6 1379.9,549.1 1373.1,549.6 1360.0,538.8 1349.2,521.7 1340.1,506.3 1324.1,494.4ZM1376.5,554.8 1385.6,550.8 1394.1,551.9 1406.1,555.3 1412.3,553.6 1419.1,555.3 1428.8,560.5 1418.6,564.0 1405.5,562.2 1395.2,560.5 1383.3,558.2ZM1429.4,562.2 1436.2,564.0 1433.4,566.3ZM1437.9,563.4 1446.4,562.2 1455.0,564.0 1449.3,566.8 1439.6,566.8ZM1459.5,564.5 1469.2,563.4 1477.7,563.4 1474.9,565.7 1463.5,566.3ZM1455.0,569.7 1465.2,572.0 1461.8,574.3 1456.1,572.0ZM1480.6,574.9 1486.3,568.6 1501.6,564.0 1494.8,568.6 1483.4,574.9ZM1453.8,531.4 1456.7,547.3 1462.9,547.9 1462.9,532.5 1468.1,542.2 1476.6,543.9 1469.8,526.8 1479.4,522.3 1470.3,521.1 1461.8,512.0 1478.9,510.9 1489.7,506.9 1488.0,507.5 1466.4,508.6 1460.7,514.9 1459.5,522.8ZM1503.3,503.5 1507.9,507.5 1509.6,511.4 1505.6,514.3 1511.3,520.6 1503.9,520.0 1503.3,510.3ZM1505.6,533.1 1517.6,533.1 1522.1,537.6 1509.0,535.9ZM1494.2,533.6 1501.6,534.8 1499.9,537.6 1494.8,536.5ZM1523.2,522.8 1525.0,520.6 1531.8,518.3 1540.9,521.1 1546.0,534.8 1557.4,524.5 1580.1,530.8 1602.9,538.8 1617.1,550.2 1631.3,576.1 1602.9,561.7 1580.1,567.4 1563.1,564.0 1560.8,545.6 1546.0,541.1 1534.6,539.3 1528.9,531.9 1531.8,529.1 1526.1,525.1ZM1522.1,587.1 1515.3,599.4 1507.3,602.3 1503.3,597.6 1494.8,596.4 1489.1,602.3 1480.6,614.2 1473.2,620.1 1466.4,629.1 1453.8,634.0 1441.9,635.8 1427.7,644.3 1424.3,659.8 1423.1,669.3 1427.7,685.3 1429.9,687.2 1432.2,698.3 1436.2,708.3 1435.6,717.8 1432.8,724.0 1440.8,728.8 1448.7,728.8 1457.8,724.6 1471.5,721.2 1483.4,713.7 1494.8,710.3 1511.9,706.3 1524.4,705.0 1534.6,709.7 1541.4,713.7 1547.1,725.3 1551.1,727.4 1556.2,718.5 1561.4,715.1 1562.5,721.9 1560.2,729.5 1565.9,732.3 1573.3,745.0 1580.1,750.0 1602.9,753.6 1631.3,746.4 1651.8,682.0 1602.9,602.3 1588.7,577.2 1583.0,587.7 1583.5,605.3 1579.0,616.5 1568.8,614.2 1557.4,607.0 1551.1,602.3 1548.8,596.4 1556.8,585.9 1546.0,584.8 1532.3,581.9 1530.1,580.7 1524.4,585.4ZM1555.1,733.7 1563.6,733.7 1560.2,735.8 1555.7,735.8ZM1517.6,580.7 1526.1,580.1 1524.4,583.6 1518.7,583.6ZM1553.4,595.3 1556.8,595.3 1555.7,598.2ZM429.3,856.2 448.0,857.1 445.2,865.4 433.8,863.5Z" fill="#f2efe9" stroke="#f2efe9" stroke-width="0.6"/>
<path d="M271.7,191.0 277.4,191.8 276.2,184.8 272.3,186.6ZM215.9,183.9 219.4,183.0 215.4,172.2 213.1,173.1ZM236.4,193.6 242.1,192.7 239.8,188.3 237.6,188.3ZM247.8,183.9 255.8,183.0 254.6,181.2 248.9,181.2ZM357.0,181.2 361.6,178.5 362.7,174.0 359.3,175.8ZM376.9,149.6 382.6,146.7 380.9,140.8 376.9,143.7ZM405.4,153.4 416.8,150.5 413.9,143.7 405.4,147.6ZM203.4,92.4 212.0,90.1 209.1,79.8 204.6,83.3ZM194.9,54.7 203.4,52.2 200.6,45.9 195.5,48.4ZM187.5,111.0 192.0,109.9 190.9,102.3 187.5,104.5ZM168.2,116.3 172.1,115.2 171.0,112.0ZM369.5,27.7 376.9,23.6 375.2,19.5 369.5,22.3ZM229.0,38.2 236.4,36.9 234.7,34.3 229.6,34.3ZM931.6,75.2 941.8,72.8 945.8,63.3 937.3,65.7ZM921.9,72.8 925.3,71.6 925.3,60.8 923.1,63.3ZM930.5,35.6 935.0,34.3 934.4,31.6ZM933.3,-30.2 939.0,-33.4 937.3,-38.2ZM858.8,111.0 861.6,108.8 862.8,100.2 859.9,103.4ZM288.8,447.8 293.3,450.1 295.0,451.9 291.0,453.0 288.2,450.1ZM775.2,478.9 779.7,478.9 778.0,470.3 771.2,464.6 773.4,470.3ZM854.8,441.4 861.1,438.5 859.4,435.6 855.4,436.7ZM379.8,604.1 384.3,605.9 387.2,610.0 382.1,607.6ZM982.8,501.8 984.5,501.2 986.2,490.9 983.9,492.1ZM1035.1,287.7 1038.6,285.6 1038.0,280.5 1035.7,282.7ZM1211.5,250.0 1218.9,250.0 1224.0,248.4 1217.2,246.9ZM1345.2,290.6 1350.3,292.0 1350.9,289.1 1346.3,288.4ZM1366.8,441.4 1372.5,443.7 1371.4,442.0 1368.5,439.6ZM962.3,-7.4 968.6,1.3 974.8,5.6 976.0,18.2 974.8,31.6 982.8,38.2 991.3,40.8 995.3,30.3 1004.4,30.3 1008.4,25.0 1004.4,16.8 1015.8,5.6 1028.3,9.9 1031.2,-25.6 1011.2,-17.9 982.8,-3.0ZM934.4,248.4 936.7,243.0 940.7,235.1 947.0,227.1 952.6,216.5 958.9,215.7 963.5,225.5 968.6,232.7 974.3,232.7 980.0,228.7 985.6,226.3 993.0,231.1 1003.8,239.8 1014.7,255.3 1003.8,259.8 991.3,259.1 984.5,257.6 977.7,252.3 968.6,252.3 960.0,255.3 954.4,259.1 943.0,258.3 937.3,255.3ZM976.0,222.2 980.0,226.3 988.5,226.3 995.9,217.3 1001.0,210.7 991.3,212.3 980.0,215.7ZM1044.2,234.3 1048.8,245.3 1054.5,253.8 1059.0,261.4 1059.0,268.8 1056.2,279.1 1064.2,287.7 1071.0,290.6 1084.6,289.9 1084.1,282.0 1079.5,271.0 1082.4,265.8 1085.2,256.1 1077.2,250.0 1076.7,240.6 1069.8,232.7 1079.5,225.5 1080.1,218.1 1077.2,214.0 1069.8,211.5 1058.5,216.5 1051.1,222.2 1046.5,228.7ZM1109.1,216.5 1113.6,224.7 1116.5,232.7 1110.8,236.7 1108.0,226.3ZM1196.1,216.5 1201.8,218.1 1213.2,216.5 1227.4,218.1 1228.6,214.8 1210.4,212.3 1200.7,213.2ZM1368.5,172.2 1375.3,170.3 1385.6,162.0 1395.2,153.4 1402.6,134.8 1399.8,132.8 1392.4,145.7 1382.7,157.2 1371.4,167.6ZM958.9,521.7 962.9,514.3 971.4,514.3 976.0,518.8 971.4,528.5 965.7,530.2 958.9,526.2ZM944.1,534.8 945.8,534.8 951.5,550.2 954.4,564.5 952.1,565.7 946.4,553.1 943.5,541.6ZM971.4,570.3 974.3,571.4 977.7,584.8 978.8,598.2 976.0,597.6 973.1,587.7 972.6,579.0ZM947.5,72.8 956.1,68.1 965.7,76.4 964.6,84.5 954.4,86.7 949.8,81.0ZM974.3,75.2 980.0,71.6 983.9,63.3 980.0,53.4 973.1,59.6ZM848.5,102.3 854.8,99.1 858.2,94.6 853.1,93.5 849.7,95.7ZM254.1,214.0 268.8,203.9 275.7,197.1 288.8,197.9 295.6,212.3 296.7,216.5 285.9,216.5 275.1,209.0 263.2,215.7ZM278.5,254.5 281.9,255.3 287.0,243.0 287.6,229.5 293.9,222.2 295.6,221.4 288.8,220.6 280.8,224.7 277.4,232.7 278.5,244.5ZM308.7,244.5 313.2,240.6 313.2,228.7 320.0,224.7 314.4,219.8 299.0,219.0 297.3,224.7 303.5,228.7 303.0,236.7 307.0,236.7ZM303.5,254.5 317.2,253.8 328.6,246.1 320.0,247.6 308.7,252.3ZM324.0,242.2 344.5,240.6 343.9,235.1 337.1,236.7 326.3,239.1ZM226.2,183.0 230.2,173.1 223.3,157.2 217.6,151.5 213.1,154.4 223.3,173.1ZM212.0,173.1 206.3,161.0 208.5,159.1 213.1,168.5ZM109.6,72.8 123.8,76.4 135.2,74.0 146.5,68.1 157.9,55.9 149.4,53.4 138.0,60.8 126.6,57.2 118.1,69.3ZM78.3,22.3 89.6,26.3 103.9,18.2 103.9,4.2 92.5,-3.0 86.8,8.4 75.4,7.0 66.9,18.2ZM144.8,103.4 160.8,100.2 175.0,95.7 172.1,93.5 157.9,95.7 145.4,99.1ZM194.9,124.6 198.9,119.4 198.9,108.8 194.9,111.0ZM368.4,11.3 385.5,4.2 388.3,14.0 376.9,16.8ZM135.7,259.8 139.7,259.8 139.1,255.3 136.3,256.8Z" fill="#b2d2dd"/>
<path d="M76.6,195.3 236.7,195.3 236.7,191.8 238.7,192.7 246.1,198.8 260.3,202.2 268.8,203.9 283.1,206.5 295.6,213.2 297.3,216.5 309.2,226.3 308.7,244.5 305.3,252.3 317.2,250.7 328.6,246.1 334.3,239.8 343.4,235.1 353.0,228.7 371.2,228.7 375.2,225.5 378.6,217.3 384.3,208.6 390.0,209.4 392.3,211.5 392.3,223.1 396.3,227.1 397.4,230.3M-24.1,-43.1 -24.1,83.3 -13.3,86.7 -4.2,96.8 7.2,89.0 19.1,104.5 28.2,123.6 38.4,130.7 38.4,142.7M111.8,320.3 125.5,319.0 124.9,320.3 146.5,328.4 162.5,328.4 162.5,325.0 172.1,325.0 183.5,339.6 191.5,343.7 195.5,338.3 201.1,338.3 207.4,348.0 212.0,353.2 214.2,360.2 223.3,363.4M253.5,432.6 253.5,427.9 256.3,423.2 263.4,423.2 263.4,413.1 270.8,413.1 272.3,412.5 275.7,408.9M270.8,413.1 270.6,424.4 276.2,425.5M276.2,425.5 269.7,433.2 265.4,437.3M269.7,433.2 278.5,436.1 279.1,439.6M281.4,441.5 290.5,436.1 295.0,430.9 304.7,429.7M290.5,452.5 296.2,452.5 301.8,453.6M306.4,470.3 306.4,464.6 308.1,461.1M334.8,474.9 337.7,466.3M364.4,400.4 369.5,401.7 370.1,409.5 369.0,411.9M371.8,448.4 366.7,451.9 366.1,456.5 362.7,463.4 366.1,470.3 366.7,473.8 379.2,476.1 392.3,480.1 394.0,484.7 392.3,490.9 395.1,496.6 392.3,500.1 396.3,509.7 397.4,509.2M328.6,508.0 337.7,511.4 348.5,516.0 350.2,516.6M350.2,516.6 359.3,522.8 363.3,529.7 371.8,529.7 379.8,539.9M379.8,539.9 383.2,522.3 380.3,509.7 396.3,509.7M397.4,509.2 405.4,511.4 413.3,508.0 420.2,502.9 421.3,495.5 431.0,490.4 432.7,486.4M432.7,486.4 436.1,476.7 434.4,471.5 437.8,468.0M432.7,486.4 438.4,492.7 437.8,501.2 442.9,508.6 456.6,505.2M456.6,505.2 453.2,496.6 452.6,482.4M470.8,502.9 468.5,492.1 470.8,483.2M456.6,505.2 460.0,505.2 470.8,502.9 478.8,501.8 484.5,492.1M321.2,535.4 325.2,541.6 330.9,544.5 337.1,533.1 350.2,521.1 350.2,516.6M379.8,539.9 363.3,545.6 358.7,557.6 366.7,573.2 376.9,579.0 382.1,578.4M382.1,578.4 387.2,588.3 385.5,600.0 383.2,605.9 385.5,610.0 382.6,617.1 377.5,622.2M382.6,617.1 387.7,627.3 390.0,640.7 392.3,649.3 395.7,649.3M382.1,578.4 387.7,579.0 402.5,572.0 406.5,573.2 413.9,587.7 425.3,593.5 433.8,594.7 435.0,602.9 446.3,610.0 448.0,617.1 450.3,621.3M450.3,621.3 446.9,631.6 441.8,627.9 423.6,632.8 421.9,645.6M395.7,649.3 408.2,645.0 412.2,649.3 421.9,645.6M395.7,649.3 388.3,659.8 387.7,675.6 382.1,685.3 379.8,698.3 379.8,715.1 377.5,728.8 374.7,742.9 373.0,764.7 370.1,787.5 371.2,811.4 364.4,832.4 361.0,845.4 367.3,858.9 380.3,863.5 387.7,869.1M421.9,645.6 431.0,655.5 442.4,662.3 450.3,665.5 457.1,678.8 461.7,677.5 467.4,666.7M450.3,621.3 450.3,632.2 448.0,644.3 461.7,646.8 463.4,656.7 467.4,666.7M467.4,666.7 471.9,676.3 460.6,685.3 450.3,696.4M450.3,696.4 447.5,711.7 445.8,721.9M450.3,696.4 461.7,701.6 475.4,711.7 474.2,719.8M768.3,302.5 767.8,319.6 756.4,328.4 728.5,347.4 728.5,351.9 702.9,351.9M728.5,351.9 728.5,362.7 709.7,362.7 709.7,378.4 703.5,382.7 704.0,391.9 681.3,391.9M728.5,354.5 750.7,369.0M750.7,369.0 741.0,369.0 747.8,421.4 713.1,426.1 708.6,430.9 684.1,423.2M750.7,369.0 784.8,393.8 801.9,404.7 845.7,378.4 832.6,361.5 834.9,335.6 832.0,335.6 824.6,306.7 826.9,289.9M832.0,335.6 836.0,325.7 843.4,315.6M920.2,326.4 920.2,387.7 987.9,387.7M920.2,387.7 914.5,399.8 914.5,402.9 868.5,379.0 862.8,381.5 845.7,378.4M801.9,404.7 798.5,426.1 779.1,430.3 766.6,430.9 752.4,444.3 747.3,456.5M868.5,379.0 866.2,395.0 857.6,440.8 846.3,439.1 823.5,441.4 798.5,449.0 791.7,447.8 783.7,439.6 779.1,430.3M708.6,430.9 713.1,444.9 729.6,450.7 732.5,457.7 747.3,456.5M702.3,461.7 714.3,458.8 719.4,467.5 729.6,472.1 732.5,457.7M713.1,476.7 719.4,467.5M729.6,472.1 734.8,490.9M747.3,456.5 762.6,461.7 762.6,453.0 778.0,452.5 783.1,453.0 791.7,447.8M762.6,461.7 760.4,486.9M778.0,452.5 784.8,481.2M783.1,453.0 787.1,480.7M798.5,449.0 793.4,479.5M683.0,444.9 700.1,443.2 708.6,430.9M682.4,436.7 699.5,438.5M682.4,440.2 699.5,440.2M857.6,440.8 854.8,458.8 846.3,470.3 828.1,489.8M914.5,402.9 906.0,432.6 903.2,447.2 911.7,458.8M857.6,440.8 864.5,458.8 856.5,459.4 866.2,473.2 880.4,470.3 903.2,454.2 911.7,458.8M911.7,458.8 923.1,457.1 931.6,461.1 948.7,458.8 960.0,447.2 971.4,461.7M987.9,387.7 997.0,411.9 985.6,433.8 971.4,461.7M985.6,433.8 1005.6,432.6 1023.2,443.2M1023.2,443.2 1016.9,450.1 1023.8,453.0 1028.3,464.6 1051.1,470.3 1034.0,487.5 1016.9,493.2 1011.2,493.8 1011.2,525.7M1011.2,493.8 999.9,496.1 982.2,489.8M971.4,461.7 965.7,470.3 982.2,489.8M982.2,489.8 971.4,492.1 968.6,494.9 953.2,496.1 933.9,486.9 917.4,468.6 911.7,458.8M870.2,503.5 883.2,491.5 903.2,491.5 933.9,486.9M866.2,473.2 860.5,487.5 870.2,503.5M833.8,503.5 853.1,503.5 870.2,503.5M870.2,503.5 878.7,516.0 871.9,527.4 865.0,539.9 847.4,550.2M853.1,503.5 860.5,529.1 845.1,541.6M847.4,550.2 871.9,561.1 880.4,561.7 902.0,557.6 903.2,579.5 914.5,579.0M914.5,579.0 932.7,582.4 941.3,564.5 953.2,563.4M953.2,496.1 948.1,516.0 944.1,534.8 951.5,550.2 953.2,563.4M968.6,494.9 977.1,507.5 971.4,521.7 991.9,533.1 1001.0,542.8M948.1,521.7 971.4,521.7M943.0,531.9 951.5,529.7 953.2,521.7M953.2,563.4 965.7,570.3 974.3,581.9 1008.4,576.1M914.5,579.0 914.5,590.6 903.2,590.6 903.2,609.4 911.7,617.1M845.1,615.4 857.6,616.5 880.4,616.5 896.9,620.1 911.7,617.1 921.4,618.9M897.5,621.9 896.9,644.3 891.8,644.3 891.8,661.7 891.8,684.6 871.9,685.9M891.8,661.7 908.8,664.8 923.1,668.0 931.6,654.8 944.7,645.6M921.4,618.9 925.9,623.1 935.6,635.2 944.7,645.6M921.4,618.9 937.3,611.2 950.9,605.9M950.9,605.9 965.2,612.4 965.7,629.1 962.3,639.5 956.1,646.8 960.0,659.8 965.2,674.3M944.7,645.6 956.1,646.8M950.9,605.9 965.7,596.4 966.9,573.2M977.1,614.8 974.3,596.4 978.2,584.8M931.6,699.0 941.8,687.2 945.3,693.7 938.4,699.0 931.6,699.0M954.4,667.4 960.6,671.8 959.5,676.9 954.4,677.5 954.4,667.4M727.4,253.0 741.0,254.5 738.7,259.8 736.5,271.0 738.2,280.5 735.9,287.7M767.8,241.4 782.0,246.1 796.2,249.2M792.2,176.7 801.9,186.6 811.0,191.0 824.6,195.3 821.2,207.3 812.7,219.0 817.8,221.4 816.1,227.9 820.7,238.3M797.3,174.0 806.4,174.0 811.6,179.4 812.1,170.3 817.8,166.6 819.0,156.3M811.6,179.4 814.4,183.9 811.0,191.0M826.9,140.8 834.3,141.8M859.4,150.5 861.1,162.9 863.3,177.6 846.8,183.9 856.5,197.1 852.0,208.1 837.7,208.1 832.6,208.1 821.2,207.3M817.8,221.4 826.4,219.0 832.0,217.3 837.7,213.2 832.6,208.1M837.7,213.2 847.4,212.3 855.9,216.5 855.4,224.7M855.9,216.5 869.0,214.8 872.4,216.5M855.4,224.7 865.0,224.7 872.4,216.5M856.5,197.1 863.3,195.3 874.1,198.8 875.3,203.9 871.9,208.1 869.0,214.8M863.3,177.6 871.9,183.9 885.0,191.0M874.1,198.8 885.0,191.0 906.0,194.5M875.3,203.9 885.0,205.6 894.6,199.6 904.3,200.5 906.0,194.5M904.3,200.5 908.3,203.9 900.3,214.8 893.5,219.8 885.0,221.4 876.4,221.4 872.4,216.5M867.3,227.1 873.6,227.1 886.1,228.7M867.3,227.1 870.2,235.1 878.1,243.8 883.2,248.4M886.1,228.7 889.5,236.7 887.2,241.4 883.2,248.4M893.5,219.8 899.7,228.7 907.1,232.7 905.4,243.0 905.4,250.0M887.2,241.4 893.5,246.1 895.2,253.0 905.4,250.0M888.4,253.0 895.2,253.0 895.2,261.4 892.3,269.6M895.2,261.4 908.3,257.6M905.4,250.0 908.3,257.6 926.5,254.5 925.9,261.4M926.5,254.5 937.3,252.3M907.1,232.7 920.2,239.1 940.7,239.1M908.3,203.9 929.3,202.2 938.4,224.7 947.0,227.1M929.3,202.2 943.0,203.9 948.7,216.5 938.4,224.7M906.0,194.5 914.5,182.1 912.3,173.1 911.7,159.1 911.7,149.6M889.5,145.7 907.7,145.7 899.2,136.8M911.7,149.6 924.8,147.6 929.3,132.8M912.3,173.1 931.6,172.2 951.5,174.9 958.9,167.6 960.0,152.5 953.8,133.8 938.4,127.7 929.3,132.8M897.5,128.7 914.5,126.7 929.3,132.8M916.2,109.9 933.3,114.2 938.4,127.7M933.3,114.2 936.2,102.3 937.3,92.4M958.9,167.6 973.7,174.9 982.8,183.0 995.3,186.6 1005.6,191.0 1003.8,205.6 995.3,211.5M936.2,81.0 945.8,69.3 954.4,57.2 945.8,38.2 948.7,18.2 943.0,-10.4M915.1,14.0 912.8,-10.4M842.9,97.9 849.1,81.0 847.4,69.3 849.7,50.9 857.6,31.6 866.2,8.4 871.9,-10.4M736.5,136.8 738.2,142.7 731.4,145.7 738.2,148.6 742.2,148.6M760.9,130.7 766.6,131.8M1005.6,241.4 1019.8,243.0 1032.9,246.9 1042.0,253.0 1053.9,253.8M1014.7,256.1 1025.5,259.1 1034.0,258.3 1042.5,259.8M1025.5,259.1 1032.9,269.6 1042.5,275.4 1051.1,279.1 1056.2,279.1M982.2,296.9 986.2,290.6 1005.6,289.9 1019.2,288.4 1032.9,287.7 1030.0,278.4 1032.9,269.6M1019.2,288.4 1012.4,306.7 998.7,314.2M982.2,306.0 986.2,308.7 980.5,314.9 982.8,319.0 998.7,314.2M977.7,316.3 980.5,314.9M980.0,327.0 976.5,340.2M998.7,314.2 1001.0,322.3 988.5,327.0 994.2,333.7 986.8,337.6 976.5,340.9M998.7,314.2 1011.2,324.3 1032.3,342.2 1042.5,342.8 1049.4,346.7M1042.5,342.8 1050.5,337.0M1032.9,287.7 1036.8,297.6 1039.7,303.2 1036.3,310.8 1040.3,316.9 1049.9,327.7 1053.9,337.0M1021.5,419.6 1034.0,416.1 1045.4,417.8 1073.8,405.9 1094.3,383.3 1092.0,383.3 1076.7,385.2 1071.0,373.4M1075.0,426.1 1080.1,419.6 1073.8,405.9M1094.3,383.3 1096.6,375.3 1098.9,369.7M1084.6,287.0 1096.6,282.0 1105.1,282.0 1113.6,285.6 1122.2,292.0 1126.2,299.0 1122.2,313.5 1124.5,327.0 1129.0,328.4 1124.5,340.9 1134.7,348.7 1128.4,367.8M1124.5,338.3 1155.2,338.3 1156.9,327.0 1172.2,324.3 1177.4,310.8 1183.0,306.0 1184.8,292.7 1201.8,289.1M1126.2,299.0 1132.4,301.1 1144.9,294.1 1156.3,286.3 1164.8,289.1 1176.2,285.6 1184.8,282.7 1201.8,289.1M1166.0,377.2 1173.4,373.4 1181.9,372.8 1179.1,364.6 1173.9,355.7 1192.2,337.0 1202.4,330.4 1201.8,319.0 1207.5,313.5 1220.6,299.7M1220.6,299.7 1230.3,306.7 1225.7,320.3 1227.4,330.4 1233.7,332.3 1235.4,344.1 1251.9,353.8 1261.6,357.7 1279.2,359.6 1279.2,350.6M1233.7,332.3 1244.5,335.0 1261.6,345.4 1279.2,350.6M1283.2,354.5 1301.4,357.0 1301.9,350.6 1287.2,349.3 1283.2,354.5M1301.9,350.6 1315.6,342.2 1324.1,340.9 1331.5,348.7M1279.2,359.6 1284.3,367.8 1279.2,372.2 1284.3,387.7M1283.2,360.8 1301.4,368.4 1303.1,375.3 1298.5,381.5 1304.2,392.5M1304.2,392.5 1308.8,381.5 1313.9,375.9 1317.3,366.5 1319.6,358.9 1331.5,348.7M1331.5,348.7 1339.5,353.2 1334.4,372.2 1344.0,387.0 1353.7,391.3 1359.4,385.2 1368.5,384.0 1379.9,382.1 1389.6,390.1M1344.0,387.0 1347.5,397.4 1338.4,401.7 1334.4,408.9 1340.6,422.6 1338.9,444.3 1340.6,455.9M1347.5,397.4 1353.7,402.9 1352.6,414.9 1362.2,412.5 1373.6,421.4 1378.2,434.4 1364.0,433.8 1360.0,437.9 1363.4,449.0M1359.4,385.2 1369.6,395.0 1375.3,408.9 1386.7,422.0 1389.6,432.6 1381.0,441.4 1383.9,450.1 1372.5,456.5M1378.2,434.4 1389.6,432.6M1347.5,478.9 1358.8,480.7M1401.5,504.6 1415.2,507.5 1429.4,507.5 1435.1,496.1 1447.6,492.1M1045.4,224.7 1056.8,216.5 1051.1,205.6 1046.5,183.9 1062.4,175.8 1088.0,182.1 1102.3,177.6 1119.3,177.6 1127.9,168.5 1122.2,154.4 1127.9,144.7 1147.8,143.7 1164.8,137.8 1181.9,143.7 1196.1,154.4 1213.2,147.6 1221.7,162.9 1233.1,175.8 1247.3,179.4 1255.9,182.1 1264.4,193.6 1274.6,194.5M1274.6,194.5 1265.5,211.5 1249.6,212.3 1246.2,224.7 1233.7,228.7 1236.0,244.5 1234.2,250.7M1234.2,250.7 1210.4,243.0 1199.0,243.0 1181.9,250.7 1176.2,256.1 1167.7,262.1 1156.3,252.3 1150.6,240.6 1125.0,232.7 1110.8,224.7 1096.6,228.7 1096.0,257.6 1079.5,252.3M1096.0,257.6 1110.8,248.4 1125.0,258.3 1133.6,271.0 1144.9,279.8 1156.3,286.3M1234.2,250.7 1213.2,263.6 1197.8,271.0 1204.7,289.1M1197.8,271.0 1179.1,268.8 1167.7,262.1M1162.0,271.0 1166.0,278.4 1164.8,289.1M1277.5,193.6 1290.0,182.1 1304.2,179.4 1318.4,186.6 1335.5,168.5 1358.3,173.1 1369.6,184.8 1383.9,183.9 1395.2,192.7 1418.0,191.0 1440.8,188.3M1277.5,193.6 1292.8,203.9 1295.7,220.6 1309.9,229.5 1324.1,246.9 1352.6,248.4 1375.3,255.3 1403.8,247.6 1414.0,239.1 1429.4,225.5 1446.4,215.7 1459.5,214.0 1449.3,205.6 1440.8,188.3M1440.8,188.3 1460.7,163.8 1477.7,154.4 1497.6,163.8 1503.3,186.6 1520.4,199.6 1546.0,201.4 1537.5,228.7 1524.4,232.7 1523.2,245.3 1521.0,249.2M1521.0,249.2 1511.9,252.3 1497.6,256.1 1485.1,268.1M1495.4,284.1 1500.5,280.5 1508.5,277.6" fill="none" stroke="#d0bfd0" stroke-width="1.6" stroke-linejoin="round"/>
<circle cx="79.3" cy="223.7" r="16" fill="#e93b2a" filter="url(#sh)"/><circle cx="141.5" cy="265.5" r="16" fill="#85842f" filter="url(#sh)"/><circle cx="81.5" cy="283.0" r="16" fill="#a8231a" filter="url(#sh)"/><circle cx="82.8" cy="285.8" r="16" fill="#72f64f" filter="url(#sh)"/><circle cx="105.5" cy="309.6" r="16" fill="#e93b2a" filter="url(#sh)"/><circle cx="349.5" cy="243.5" r="16" fill="#72f64f" filter="url(#sh)"/><circle cx="337.3" cy="273.8" r="16" fill="#72f64f" filter="url(#sh)"/><circle cx="323.5" cy="317.8" r="16" fill="#72f64f" filter="url(#sh)"/><circle cx="776.9" cy="173.9" r="16" fill="#e93b2a" filter="url(#sh)"/><circle cx="801.1" cy="176.7" r="16" fill="#72f64f" filter="url(#sh)"/><circle cx="859.7" cy="158.1" r="16" fill="#72f64f" filter="url(#sh)"/><circle cx="828.6" cy="186.4" r="35" fill="#72f64f" filter="url(#sh)"/><circle cx="823.8" cy="193.7" r="16.5" fill="#e93b2a" filter="url(#sh)"/><circle cx="931.9" cy="79.7" r="16" fill="#72f64f" filter="url(#sh)"/><circle cx="1049.3" cy="123.3" r="16" fill="#e93b2a" filter="url(#sh)"/><circle cx="1101.1" cy="141.6" r="16" fill="#e93b2a" filter="url(#sh)"/><circle cx="1126.4" cy="137.8" r="16" fill="#e93b2a" filter="url(#sh)"/><circle cx="1061.3" cy="262.8" r="16" fill="#e93b2a" filter="url(#sh)"/><circle cx="1159.2" cy="369.6" r="16" fill="#e93b2a" filter="url(#sh)"/><circle cx="1502.1" cy="285.6" r="16" fill="#e93b2a" filter="url(#sh)"/><circle cx="1367.6" cy="507.2" r="16" fill="#e93b2a" filter="url(#sh)"/>
</svg>
<div style="position:absolute;left:20px;top:20px;width:68px;height:128px;border:4px solid rgba(0,0,0,0.2);border-radius:8px;background:#fff;background-clip:padding-box;overflow:hidden">
 <div style="height:60px;border-bottom:2px solid #ccc;position:relative"><div style="position:absolute;left:18.5px;top:31.5px;width:25px;height:4.5px;background:#000"></div><div style="position:absolute;left:29px;top:21.5px;width:4.5px;height:25px;background:#000"></div></div>
 <div style="height:60px;position:relative"><div style="position:absolute;left:18.5px;top:30px;width:25px;height:4.5px;background:#000"></div></div>
</div>
<div style="position:absolute;left:1083px;top:766px;width:474px;height:34px;background:rgba(255,255,255,0.8);font-size:24.4px;line-height:34px;color:#333;white-space:nowrap;padding-left:9px">
<span style="display:inline-block;width:24px;height:16px;vertical-align:-1px;margin-right:7px;background:linear-gradient(#4c72d6 50%,#fdd64a 50%)"></span><span style="color:#2a7ab0">Leaflet</span> | © <span style="color:#2a7ab0">OpenStreetMap</span> contributors</div>
</div>
<div id="rep">
 <div class="abs" style="left:55.5px;top:37.8px;font-size:55px;line-height:56px;color:#212529;white-space:nowrap;-webkit-text-stroke:1.7px #212529">Recent Reports</div>
 <div class="th" style="left:41px;top:148px">Domain</div>
 <div class="th" style="left:323px;top:148px">Adkim</div>
 <div class="th" style="left:468px;top:148px">Spf</div>
 <div class="th" style="left:580px;top:148px">Send Date</div>
 <div class="hr" style="top:211px"></div>
 <div class="td" style="left:41px;top:230px;letter-spacing:0.6px">dmarcflow.com</div><div class="td" style="left:323px;top:230px">pass</div><div class="td" style="left:468px;top:230px">pass</div><div class="td" style="left:580px;top:230px">25.01.2025</div><div class="hr" style="top:293px"></div>
<div class="td" style="left:41px;top:312px;letter-spacing:0.6px">dmarcflow.com</div><div class="td" style="left:323px;top:312px">fail</div><div class="td" style="left:468px;top:312px">pass</div><div class="td" style="left:580px;top:312px">25.01.2025</div><div class="hr" style="top:375px"></div>
<div class="td" style="left:41px;top:394px;letter-spacing:0.6px">dmarcflow.com</div><div class="td" style="left:323px;top:394px">fail</div><div class="td" style="left:468px;top:394px">fail</div><div class="td" style="left:580px;top:394px">27.01.2025</div><div class="hr" style="top:457px"></div>
<div class="td" style="left:41px;top:476px;letter-spacing:0.6px">dmarcflow.com</div><div class="td" style="left:323px;top:476px">fail</div><div class="td" style="left:468px;top:476px">pass</div><div class="td" style="left:580px;top:476px">27.01.2025</div><div class="hr" style="top:539px"></div>

</div>
<div id="btmshade" style="position:absolute;left:0;top:1680px;width:2914px;height:60px;background:linear-gradient(rgba(0,0,0,0) 0%,rgba(0,0,0,0.012) 40%,rgba(0,0,0,0.055) 100%);pointer-events:none"></div>
</body></html>
